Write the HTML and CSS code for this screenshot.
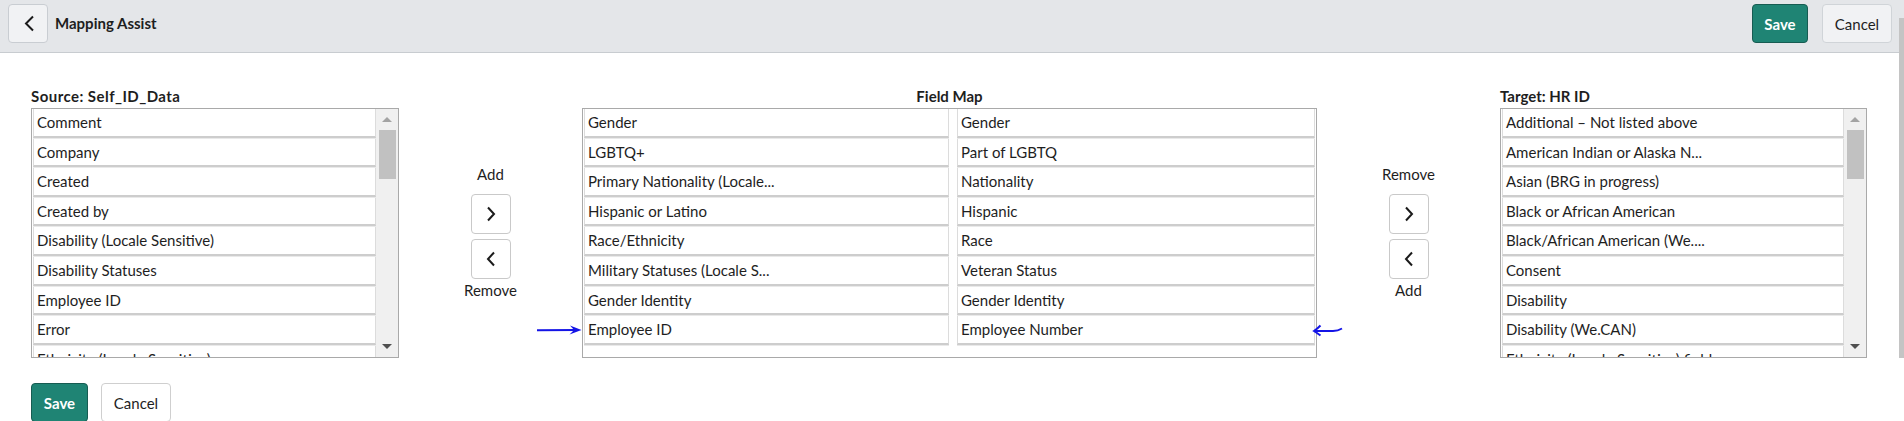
FILE: index.html
```html
<!DOCTYPE html>
<html lang="en">
<head>
    <meta charset="UTF-8">
    <meta name="viewport" content="width=device-width, initial-scale=1.0">
    <title>Mapping Assist</title>
    <link rel="stylesheet" href="styles.css">
</head>
<body>
    <header class="topbar">
        <div class="topbar-left">
            <button class="back-btn" aria-label="Back">
                <svg width="12" height="17" viewBox="0 0 12 17"><path d="M10 1.5 L3 8.5 L10 15.5" fill="none" stroke="#1b1b1b" stroke-width="2"/></svg>
            </button>
            <h1 class="title">Mapping Assist</h1>
        </div>
        <div class="topbar-actions">
            <button class="btn btn-primary">Save</button>
            <button class="btn btn-default">Cancel</button>
        </div>
    </header>

    <main class="mapper">
        <!-- source table -->
        <section class="col">
            <div class="col-label spaced">Source: Self_ID_Data</div>
            <div class="listbox">
                <ul class="rows">
                    <li class="row">Comment</li>
                    <li class="row">Company</li>
                    <li class="row">Created</li>
                    <li class="row">Created by</li>
                    <li class="row">Disability (Locale Sensitive)</li>
                    <li class="row">Disability Statuses</li>
                    <li class="row">Employee ID</li>
                    <li class="row">Error</li>
                    <li class="row">Ethnicity (Locale Sensitive)</li>
                </ul>
                <div class="vscroll">
                    <div class="sb-btn sb-up"><span class="tri-up"></span></div>
                    <div class="sb-thumb"></div>
                    <div class="sb-space"></div>
                    <div class="sb-btn sb-down"><span class="tri-down"></span></div>
                </div>
            </div>
        </section>

        <div class="mover">
            <div class="mover-label">Add</div>
            <button class="move-btn first" aria-label="Add">
                <svg width="10" height="16" viewBox="0 0 10 16"><path d="M2 1.5 L8 8 L2 14.5" fill="none" stroke="#1b1b1b" stroke-width="2"/></svg>
            </button>
            <button class="move-btn" aria-label="Remove">
                <svg width="10" height="16" viewBox="0 0 10 16"><path d="M8 1.5 L2 8 L8 14.5" fill="none" stroke="#1b1b1b" stroke-width="2"/></svg>
            </button>
            <div class="mover-label bottom">Remove</div>
        </div>

        <!-- field map -->
        <section class="col">
            <div class="col-label center">Field Map</div>
            <div class="mapbox">
                <ul class="rows">
                    <li class="row">Gender</li>
                    <li class="row">LGBTQ+</li>
                    <li class="row">Primary Nationality (Locale...</li>
                    <li class="row">Hispanic or Latino</li>
                    <li class="row">Race/Ethnicity</li>
                    <li class="row">Military Statuses (Locale S...</li>
                    <li class="row">Gender Identity</li>
                    <li class="row">Employee ID</li>
                </ul>
                <ul class="rows">
                    <li class="row">Gender</li>
                    <li class="row">Part of LGBTQ</li>
                    <li class="row">Nationality</li>
                    <li class="row">Hispanic</li>
                    <li class="row">Race</li>
                    <li class="row">Veteran Status</li>
                    <li class="row">Gender Identity</li>
                    <li class="row">Employee Number</li>
                </ul>
                <svg class="pointer pointer-left" width="48" height="14" viewBox="0 0 48 14">
                    <path d="M2 7.2 L41 7" stroke="#1414e6" stroke-width="2" fill="none"/>
                    <path d="M35 2.5 L46.5 7 L34.5 11.5 L39 7 Z" fill="#1414e6"/>
                </svg>
                <svg class="pointer pointer-right" width="32" height="14" viewBox="0 0 32 14">
                    <path d="M8.5 2.5 Q5 6 2 8 Q5 10 8.5 12.5" stroke="#1414e6" stroke-width="2" fill="none"/>
                    <path d="M2 8 L21 8 Q26 8 30 5.5" stroke="#1414e6" stroke-width="1.8" fill="none"/>
                </svg>
            </div>
        </section>

        <div class="mover">
            <div class="mover-label">Remove</div>
            <button class="move-btn first" aria-label="Remove">
                <svg width="10" height="16" viewBox="0 0 10 16"><path d="M2 1.5 L8 8 L2 14.5" fill="none" stroke="#1b1b1b" stroke-width="2"/></svg>
            </button>
            <button class="move-btn" aria-label="Add">
                <svg width="10" height="16" viewBox="0 0 10 16"><path d="M8 1.5 L2 8 L8 14.5" fill="none" stroke="#1b1b1b" stroke-width="2"/></svg>
            </button>
            <div class="mover-label bottom">Add</div>
        </div>

        <!-- target table -->
        <section class="col">
            <div class="col-label">Target: HR ID</div>
            <div class="listbox">
                <ul class="rows">
                    <li class="row">Additional – Not listed above</li>
                    <li class="row">American Indian or Alaska N...</li>
                    <li class="row">Asian (BRG in progress)</li>
                    <li class="row">Black or African American</li>
                    <li class="row">Black/African American (We....</li>
                    <li class="row">Consent</li>
                    <li class="row">Disability</li>
                    <li class="row">Disability (We.CAN)</li>
                    <li class="row">Ethnicity (Locale Sensitive) field</li>
                </ul>
                <div class="vscroll">
                    <div class="sb-btn sb-up"><span class="tri-up"></span></div>
                    <div class="sb-thumb"></div>
                    <div class="sb-space"></div>
                    <div class="sb-btn sb-down"><span class="tri-down"></span></div>
                </div>
            </div>
        </section>
    </main>

    <div class="footer-actions">
        <button class="btn btn-primary wide">Save</button>
        <button class="btn btn-default plain">Cancel</button>
    </div>

    <div class="page-scroll"></div>
</body>
</html>
```

FILE: styles.css
```css
* {
    box-sizing: border-box;
}

body {
    margin: 0;
    font-family: Lato, "Liberation Sans", sans-serif;
    font-size: 15px;
    color: #1e1e1e;
    background-color: #fff;
    overflow: hidden;
}

.topbar {
    display: flex;
    justify-content: space-between;
    align-items: flex-start;
    height: 53px;
    padding: 4px 12px 0 8px;
    background-color: #e4e6e9;
    border-bottom: 1px solid #c8ccd0;
}

.topbar-left {
    display: flex;
    align-items: center;
    gap: 7px;
}

.back-btn {
    width: 40px;
    height: 39px;
    padding: 0 0 0 1px;
    border: 1px solid #c9cdd2;
    border-radius: 4px;
    background-color: #f1f2f4;
    display: flex;
    align-items: center;
    justify-content: center;
}

.title {
    margin: 0;
    font-size: 15px;
    font-weight: 700;
    line-height: 39px;
}

.topbar-actions {
    display: flex;
    gap: 14px;
}

.btn {
    height: 39px;
    padding: 0;
    border-radius: 4px;
    font-family: inherit;
    font-size: 15px;
    cursor: pointer;
}

.btn-primary {
    width: 56px;
    background-color: #1f8474;
    border: 1px solid #175c52;
    color: #fff;
    font-weight: 700;
}

.btn-default {
    width: 70px;
    background-color: #f1f2f4;
    border: 1px solid #d0d4d8;
    color: #1e1e1e;
}

.mapper {
    display: grid;
    grid-template-columns: 368px 183px 735px 183px 367px;
    padding: 33px 0 0 31px;
}

.col-label {
    height: 20px;
    margin-bottom: 2px;
    font-weight: 700;
    line-height: 20px;
    white-space: nowrap;
}

.col-label.spaced {
    letter-spacing: 0.45px;
}

.col-label.center {
    text-align: center;
}

.listbox {
    display: flex;
    height: 250px;
    border: 1px solid #a9a9a9;
    overflow: hidden;
}

.rows {
    list-style: none;
    margin: 0;
    padding: 0;
}

.listbox .rows {
    flex: 1;
    padding-left: 1px;
}

.row {
    height: 28.6px;
    margin-bottom: 1px;
    padding-left: 3px;
    line-height: 27.6px;
    background-color: #fff;
    border-left: 1px solid #dcdcdc;
    border-right: 1px solid #dcdcdc;
    border-bottom: 2px solid #cdcdcd;
    box-shadow: 0 1px 0 #e9e9e9;
    white-space: nowrap;
    overflow: hidden;
}

.vscroll {
    display: flex;
    flex-direction: column;
    width: 22px;
    background-color: #f0f0f0;
}

.sb-btn {
    display: flex;
    align-items: center;
    justify-content: center;
}

.sb-up {
    height: 21px;
}

.sb-down {
    height: 22px;
}

.tri-up {
    width: 0;
    height: 0;
    border-left: 5px solid transparent;
    border-right: 5px solid transparent;
    border-bottom: 5px solid #a3a3a3;
}

.tri-down {
    width: 0;
    height: 0;
    border-left: 5px solid transparent;
    border-right: 5px solid transparent;
    border-top: 5px solid #505050;
}

.sb-thumb {
    height: 49px;
    margin: 0 2px 0 3px;
    background-color: #c1c1c1;
}

.sb-space {
    flex: 1;
}

.mover {
    display: flex;
    flex-direction: column;
    align-items: center;
    padding-top: 78px;
}

.mover-label {
    line-height: 20px;
}

.mover-label.bottom {
    margin-top: 1px;
}

.move-btn {
    width: 40px;
    height: 40px;
    margin-top: 5px;
    padding: 0;
    border: 1px solid #c9c9c9;
    border-radius: 4px;
    background-color: #fff;
    display: flex;
    align-items: center;
    justify-content: center;
}

.move-btn.first {
    margin-top: 10px;
}

.mapbox {
    position: relative;
    display: grid;
    grid-template-columns: 365px 358px;
    column-gap: 8px;
    align-content: start;
    height: 250px;
    padding: 0 1px;
    border: 1px solid #a9a9a9;
}

.pointer {
    position: absolute;
    top: 214px;
}

.pointer-left {
    left: -48px;
}

.pointer-right {
    left: 729px;
}

.footer-actions {
    display: flex;
    gap: 13px;
    padding: 25px 0 0 31px;
}

.btn-primary.wide {
    width: 57px;
}

.btn-default.plain {
    background-color: #fff;
    border-color: #cfcfcf;
}

.page-scroll {
    position: fixed;
    top: 18px;
    right: 0;
    width: 5px;
    height: 340px;
    background-color: #c4c4c4;
}
```
